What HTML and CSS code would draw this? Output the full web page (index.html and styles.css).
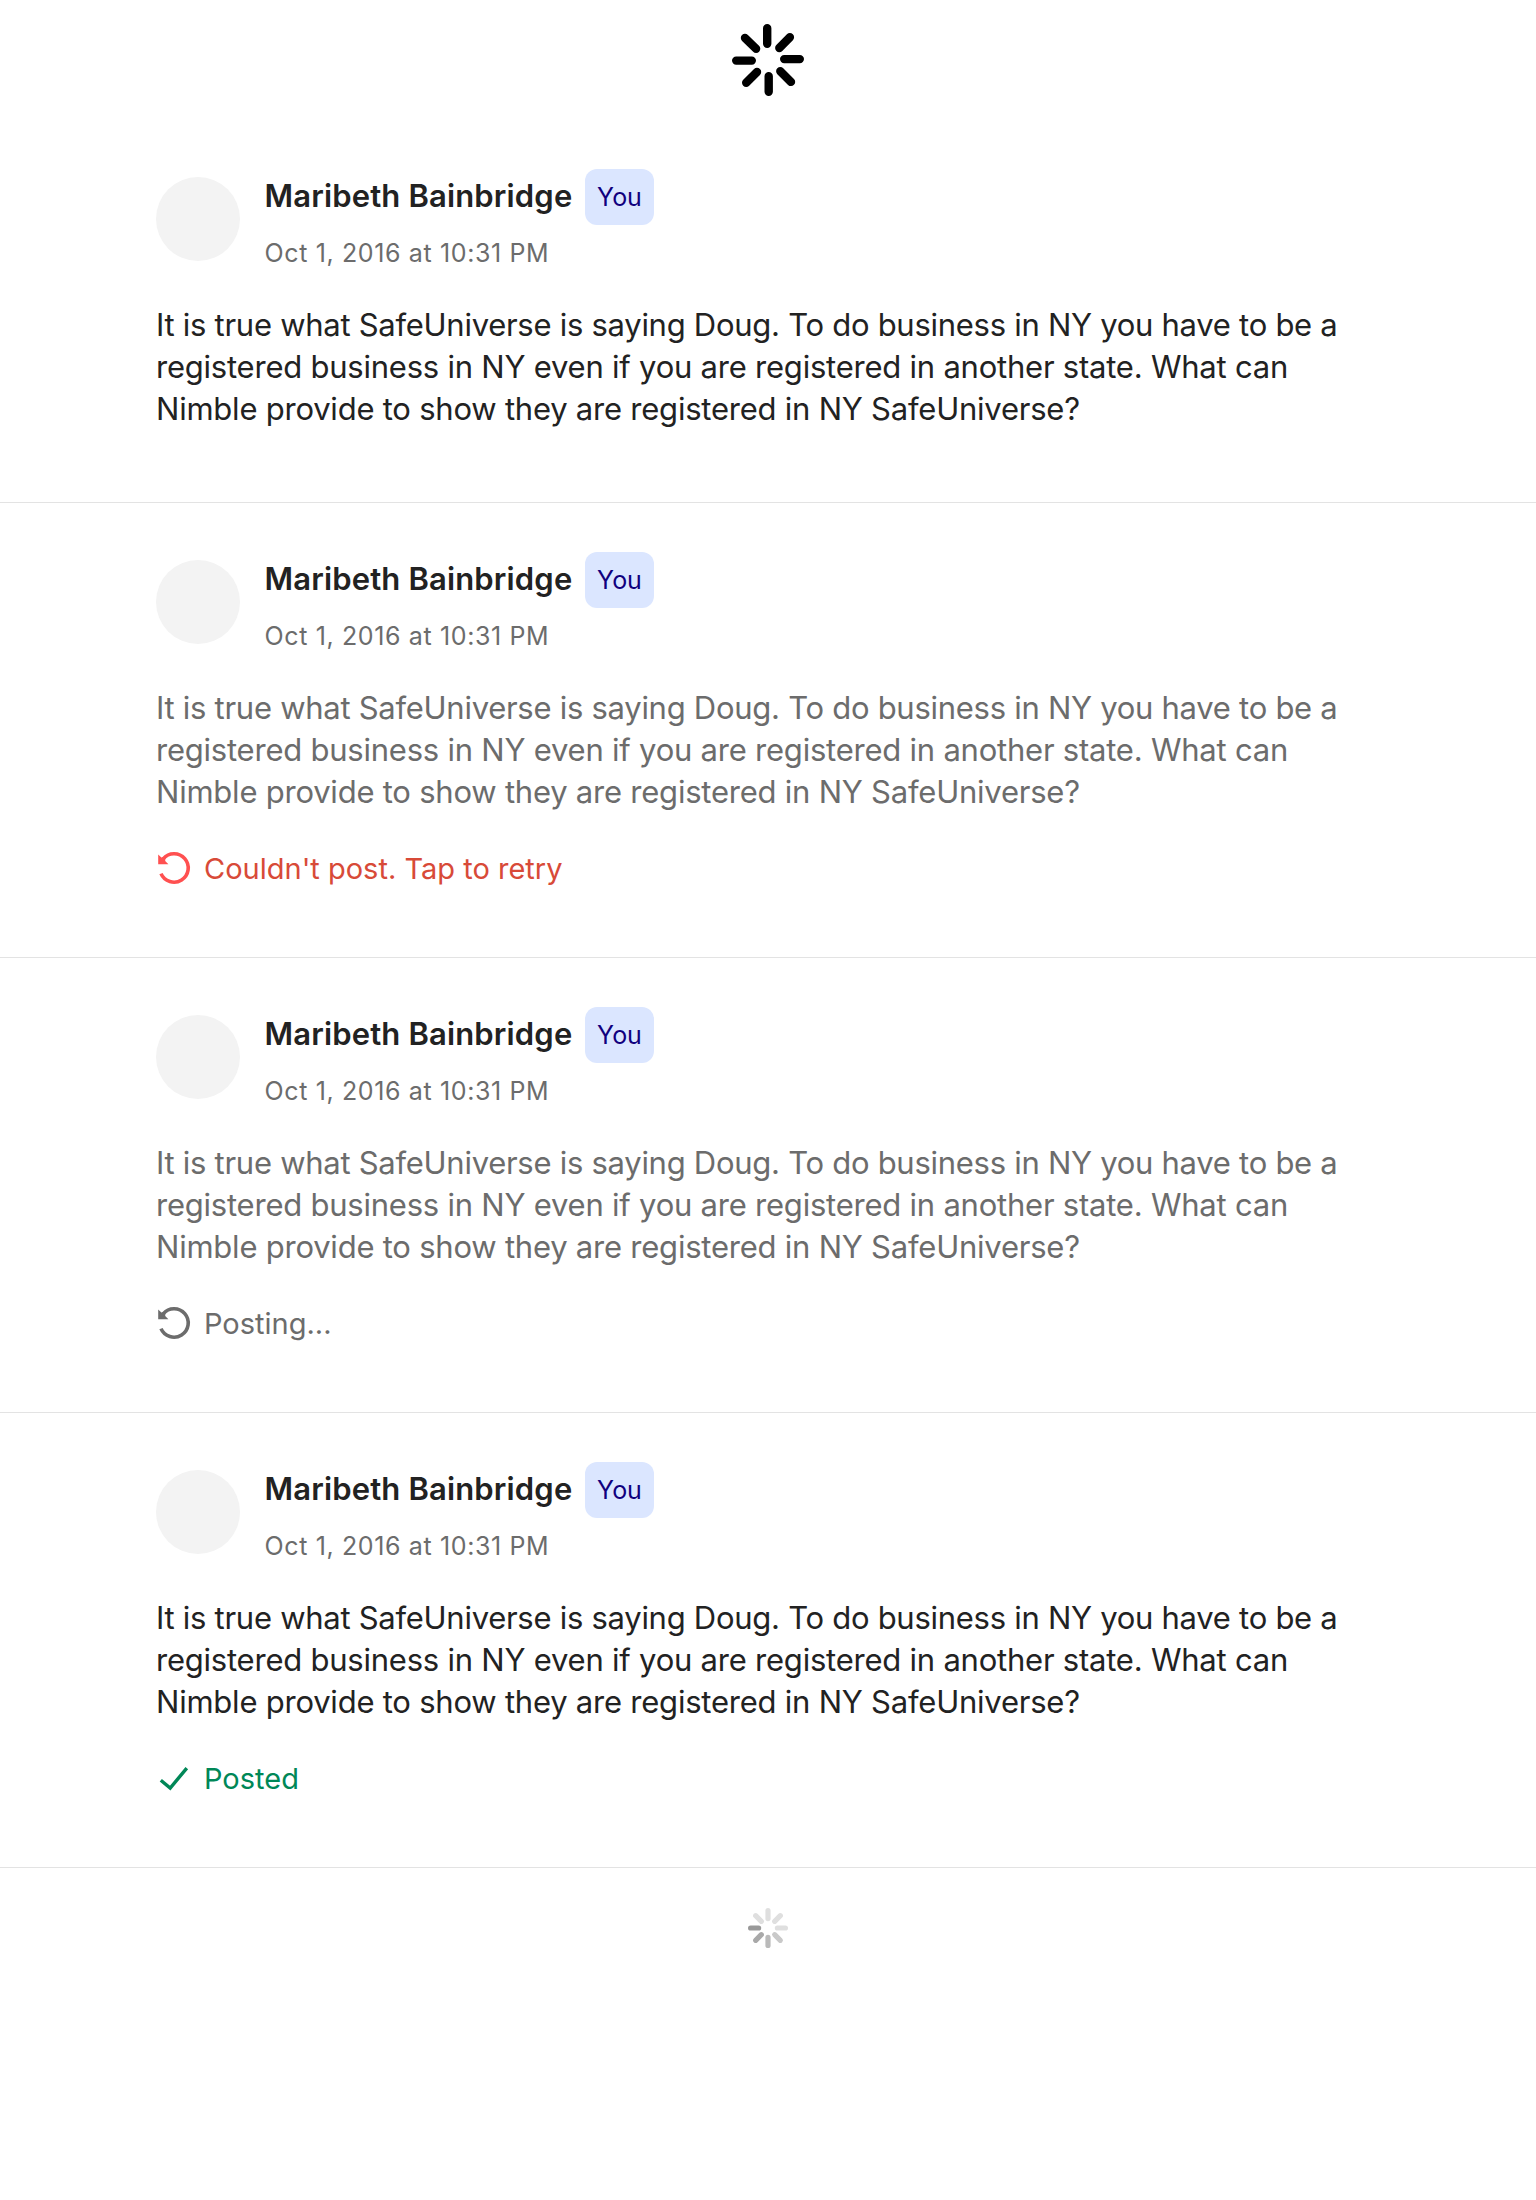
FILE: index.html
```html
<!DOCTYPE html>
<html lang="en">
<head>
<meta charset="utf-8">
<title>Comments</title>
<link rel="stylesheet" href="styles.css">
</head>
<body>
<svg class="symbols" aria-hidden="true">
  <symbol id="retry" viewBox="0 0 36 36">
    <path d="M5 23.6A14.2 14.2 0 1 0 7.2 8.8" fill="none" stroke="currentColor" stroke-width="3.6"/>
    <path d="M2.2 4.6L5.4 7.6L9.4 6.4L9.2 11L12.4 14.2H2.2Z" fill="currentColor"/>
  </symbol>
  <symbol id="check" viewBox="0 0 36 36">
    <path d="M4.8 20.2L14.2 28L30.8 8.2" fill="none" stroke="currentColor" stroke-width="3.4"/>
  </symbol>
</svg>
<main class="page">
  <div class="loader">
    <svg class="spinner" viewBox="0 0 80 80" stroke="#000" stroke-width="8.4" stroke-linecap="round">
      <path d="M39.2 28.2V43.8M51.3 48L61.9 37.2M56.2 59.1H71.8M52.3 71.3L63 81.9M40.7 76.2V91.8M29 72L18.2 82.8M23.8 60.6H8.2M28.1 48.7L17 37.9" transform="translate(0 -20)"/>
    </svg>
  </div>

  <article class="comment">
    <header class="head">
      <div class="avatar"></div>
      <div class="meta">
        <div class="who"><span class="name">Maribeth Bainbridge</span><span class="badge">You</span></div>
        <time class="date">Oct 1, 2016 at 10:31 PM</time>
      </div>
    </header>
    <p class="text"><span class="line tight">It is true what SafeUniverse is saying Doug. To do business in NY you have to be a</span><span class="line">registered business in NY even if you are registered in another state. What can</span><span class="line">Nimble provide to show they are registered in NY SafeUniverse?</span></p>
  </article>

  <article class="comment with-status">
    <header class="head">
      <div class="avatar"></div>
      <div class="meta">
        <div class="who"><span class="name">Maribeth Bainbridge</span><span class="badge">You</span></div>
        <time class="date">Oct 1, 2016 at 10:31 PM</time>
      </div>
    </header>
    <p class="text muted"><span class="line tight">It is true what SafeUniverse is saying Doug. To do business in NY you have to be a</span><span class="line">registered business in NY even if you are registered in another state. What can</span><span class="line">Nimble provide to show they are registered in NY SafeUniverse?</span></p>
    <div class="status failed"><svg class="icon"><use href="#retry"/></svg><span>Couldn't post. Tap to retry</span></div>
  </article>

  <article class="comment with-status">
    <header class="head">
      <div class="avatar"></div>
      <div class="meta">
        <div class="who"><span class="name">Maribeth Bainbridge</span><span class="badge">You</span></div>
        <time class="date">Oct 1, 2016 at 10:31 PM</time>
      </div>
    </header>
    <p class="text muted"><span class="line tight">It is true what SafeUniverse is saying Doug. To do business in NY you have to be a</span><span class="line">registered business in NY even if you are registered in another state. What can</span><span class="line">Nimble provide to show they are registered in NY SafeUniverse?</span></p>
    <div class="status pending"><svg class="icon"><use href="#retry"/></svg><span>Posting...</span></div>
  </article>

  <article class="comment with-status">
    <header class="head">
      <div class="avatar"></div>
      <div class="meta">
        <div class="who"><span class="name">Maribeth Bainbridge</span><span class="badge">You</span></div>
        <time class="date">Oct 1, 2016 at 10:31 PM</time>
      </div>
    </header>
    <p class="text"><span class="line tight">It is true what SafeUniverse is saying Doug. To do business in NY you have to be a</span><span class="line">registered business in NY even if you are registered in another state. What can</span><span class="line">Nimble provide to show they are registered in NY SafeUniverse?</span></p>
    <div class="status posted"><svg class="icon"><use href="#check"/></svg><span>Posted</span></div>
  </article>

  <div class="more">
    <svg class="spinner-small" viewBox="-20 -20 40 40" stroke-width="5.2" stroke-linecap="round">
      <path stroke="#dfdfdf" d="M0 -9.4V-17.4M6.7 -6.7L12.3 -12.3M9.4 0H17.4M-6.7 -6.7L-12.3 -12.3"/>
      <path stroke="#c9c9c9" d="M6.7 6.7L12.3 12.3"/>
      <path stroke="#bababa" d="M0 9.4V17.4"/>
      <path stroke="#a9a9a9" d="M-6.7 6.7L-12.3 12.3"/>
      <path stroke="#999" d="M-9.4 0H-17.4"/>
    </svg>
  </div>
</main>
</body>
</html>
```
FILE: styles.css
```css
* { box-sizing: border-box; }
body {
  margin: 0;
  background: #fff;
  color: #222;
  font-family: Inter, "Liberation Sans", sans-serif;
}
.symbols { display: none; }
.page { min-height: 2200px; }
.loader {
  height: 120px;
  padding-top: 20px;
  display: flex;
  justify-content: center;
  align-items: flex-start;
}
.spinner { width: 80px; height: 80px; }
.comment {
  height: 383px;
  padding: 49px 156px 0;
  border-bottom: 1px solid #e3e3e3;
}
.with-status { height: 455px; }
.head { display: flex; gap: 24px; height: 110px; }
.avatar {
  width: 84px;
  height: 84px;
  margin-top: 8px;
  border-radius: 50%;
  background: #f3f3f3;
}
.who { display: flex; align-items: center; gap: 13px; height: 56px; }
.name {
  width: 308px;
  line-height: 56px;
  margin-top: -2px;
  padding-left: 0.5px;
  font-size: 31px;
  font-weight: 600;
  letter-spacing: 0.15px;
  white-space: nowrap;
}
.badge {
  width: 69px;
  height: 56px;
  border-radius: 12px;
  background: #dbe6ff;
  color: #10007e;
  font-size: 25px;
  line-height: 56px;
  text-align: center;
}
.date {
  display: block;
  margin-top: 10px;
  padding-left: 0.5px;
  color: #6c6c6c;
  font-size: 25px;
  line-height: 36px;
  letter-spacing: 0.63px;
  white-space: nowrap;
}
.text {
  margin: 25px 0 0;
  font-size: 31px;
  line-height: 42px;
  white-space: nowrap;
}
.line { display: block; letter-spacing: -0.225px; }
.tight { letter-spacing: -0.275px; }
.muted { color: #6c6c6c; }
.status {
  display: flex;
  align-items: center;
  gap: 12px;
  height: 40px;
  margin-top: 36px;
  font-size: 29px;
  line-height: 40px;
  white-space: nowrap;
}
.icon { width: 36px; height: 36px; margin-top: -2px; }
.failed { color: #d84a38; }
.failed .icon { color: #ff5050; }
.pending { color: #6c6c6c; }
.posted { color: #008757; }
.more { display: flex; justify-content: center; padding-top: 40px; }
.spinner-small { width: 40px; height: 40px; }
```
